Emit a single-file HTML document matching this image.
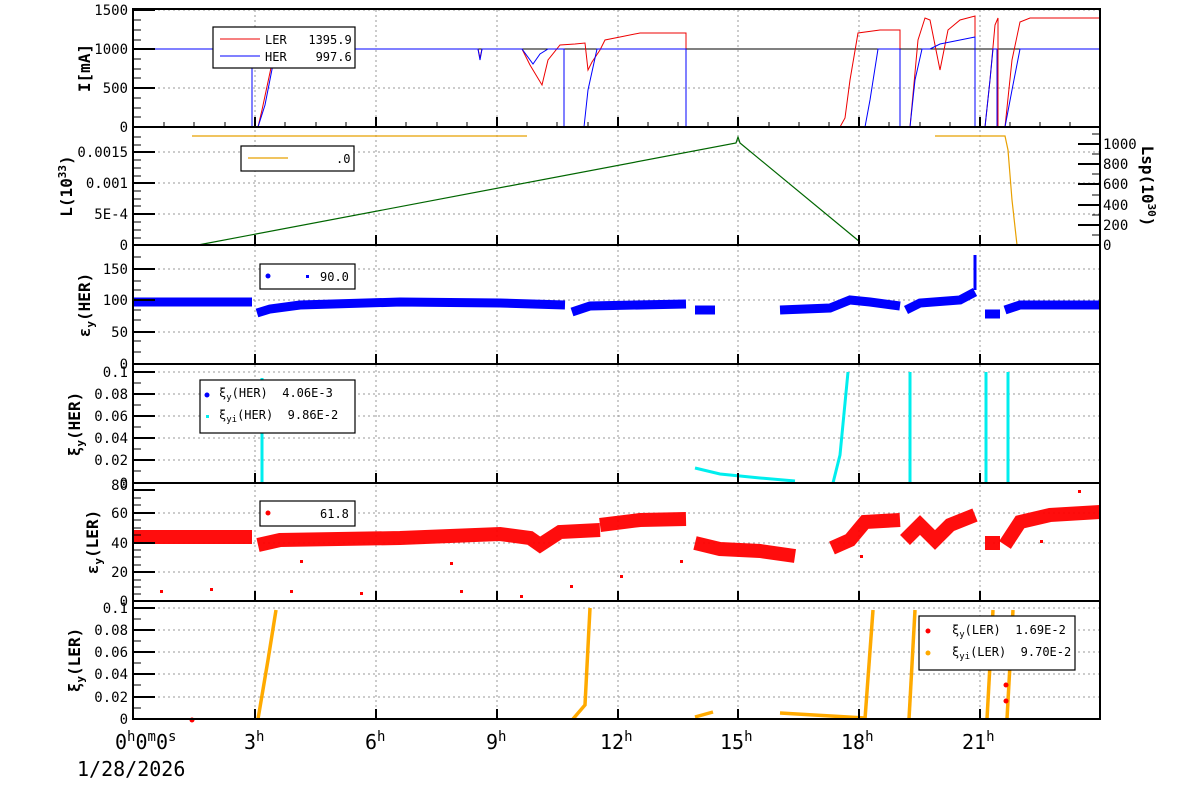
<!DOCTYPE html><html><head><style>body{margin:0;background:#fff}svg{display:block}text{font-family:"DejaVu Sans Mono","Liberation Mono",monospace;fill:#000;white-space:pre}</style></head><body>
<svg width="1200" height="798" viewBox="0 0 1200 798" xmlns="http://www.w3.org/2000/svg" xml:space="preserve">
<g stroke="#999" stroke-dasharray="2,3" stroke-width="1">
<path d="M255 10V719M376 10V719M497 10V719M618 10V719M738 10V719M859 10V719M980 10V719"/>
<path d="M133 10H1100M133 49H1100M133 88H1100M133 152H1100M133 183H1100M133 214H1100M133 269H1100M133 300H1100M133 332H1100M133 372H1100M133 394H1100M133 416H1100M133 438H1100M133 460H1100M133 513H1100M133 543H1100M133 572H1100M133 608H1100M133 630H1100M133 652H1100M133 674H1100M133 697H1100"/>
</g>
<path d="M133 49H1100" stroke="#000" stroke-width="1" fill="none"/>
<path d="M133 49H252V127H258L262 110L275 49H478L480 58L482 49H522L530 65L542 85L548 60L560 45L575 44L585 43L588 70L592 62L600 50L605 40L620 37L640 33H686V127H840L845 118L850 80L858 33L880 30L900 30V127H910L918 40L925 18L930 20L940 70L948 30L960 20L975 16V127H985L990 80L995 25L998 18V127H1005L1012 60L1020 22L1030 18H1100" stroke="#e00" stroke-width="1" fill="none"/>
<path d="M133 49H252V127H258L265 105L276 49H478L480 60L482 49H522L533 64L540 54L548 49H564V127H584L588 90L597 49H686V127H865L870 100L878 49H900V127H910L915 80L922 49H930L940 44L960 40L975 37V127H985L990 80L993 49H997V127H1005L1012 90L1020 49H1100" stroke="#00f" stroke-width="1" fill="none"/>
<path d="M192 136H527M935 136H1005L1008 150L1012 200L1017 245" stroke="#e8a000" stroke-width="1.2" fill="none"/>
<path d="M198 245L736 143L738 137L740 143L860 242" stroke="#060" stroke-width="1.2" fill="none"/>
<g stroke="#00f" stroke-width="9" fill="none">
<path d="M133 302H252"/><path d="M257 313L270 309L300 305L400 302L500 303L565 305"/><path d="M572 312L590 306L686 304"/><path d="M695 310H715"/><path d="M780 310L830 308L850 300L870 302L900 306"/><path d="M906 310L920 303L960 300L975 292"/><path d="M985 314H1000"/><path d="M1005 310L1020 305H1100"/>
</g>
<path d="M975 290V255" stroke="#00f" stroke-width="3"/>
<g stroke="#0ee" stroke-width="3" fill="none">
<path d="M262 483V378"/><path d="M695 468L720 474L760 478L795 481"/><path d="M833 483L840 455L848 372"/><path d="M910 483V372"/><path d="M986 483V372"/><path d="M1008 483V372"/>
</g>
<g stroke="#f00" stroke-width="14" fill="none" stroke-opacity="0.95">
<path d="M133 537H252"/><path d="M258 545L280 540L400 538L500 534L530 538L540 545L560 532L600 530"/><path d="M600 525L640 520L686 519"/><path d="M695 543L720 549L760 551L795 556"/><path d="M832 548L850 540L865 522L900 520"/><path d="M905 540L920 525L935 540L950 525L975 515"/><path d="M985 543H1000"/><path d="M1005 545L1020 522L1050 515L1100 512"/>
</g>
<g fill="#f00"><rect x="160" y="590" width="3" height="3"/><rect x="210" y="588" width="3" height="3"/><rect x="290" y="590" width="3" height="3"/><rect x="360" y="592" width="3" height="3"/><rect x="460" y="590" width="3" height="3"/><rect x="570" y="585" width="3" height="3"/><rect x="620" y="575" width="3" height="3"/><rect x="520" y="595" width="3" height="3"/><rect x="1078" y="490" width="3" height="3"/><rect x="300" y="560" width="3" height="3"/><rect x="450" y="562" width="3" height="3"/><rect x="680" y="560" width="3" height="3"/><rect x="860" y="555" width="3" height="3"/><rect x="1040" y="540" width="3" height="3"/></g>
<g stroke="#fa0" stroke-width="3.5" fill="none">
<path d="M258 719L268 660L276 610"/><path d="M573 719L585 705L590 608"/><path d="M695 717L713 712"/><path d="M780 713L865 718"/><path d="M865 719L873 610"/><path d="M909 719L915 610"/><path d="M987 719L993 610"/><path d="M1007 719L1013 610"/>
</g>
<circle cx="192" cy="720" r="2.5" fill="#f00"/><circle cx="1006" cy="685" r="2.5" fill="#f00"/><circle cx="1006" cy="701" r="2.5" fill="#f00"/>
<g fill="none" stroke="#000" stroke-width="2">
<rect x="133" y="9" width="967" height="710"/>
<path d="M133 127H1100M133 245H1100M133 364H1100M133 483H1100M133 601H1100"/>
</g>
<g stroke="#000" stroke-width="2">
<path d="M255 127v-10M376 127v-10M497 127v-10M618 127v-10M738 127v-10M859 127v-10M980 127v-10M255 245v-10M376 245v-10M497 245v-10M618 245v-10M738 245v-10M859 245v-10M980 245v-10M255 364v-10M376 364v-10M497 364v-10M618 364v-10M738 364v-10M859 364v-10M980 364v-10M255 483v-10M376 483v-10M497 483v-10M618 483v-10M738 483v-10M859 483v-10M980 483v-10M255 601v-10M376 601v-10M497 601v-10M618 601v-10M738 601v-10M859 601v-10M980 601v-10M255 719v-10M376 719v-10M497 719v-10M618 719v-10M738 719v-10M859 719v-10M980 719v-10"/>
<path d="M133 10h22M133 49h22M133 88h22M133 152h22M133 183h22M133 214h22M133 269h22M133 300h22M133 332h22M133 372h22M133 394h22M133 416h22M133 438h22M133 460h22M133 490h22M133 513h22M133 543h22M133 572h22M133 608h22M133 630h22M133 652h22M133 674h22M133 697h22M1100 144h-22M1100 164h-22M1100 184h-22M1100 205h-22M1100 225h-22"/>
</g>
<g stroke="#000" stroke-width="1"><path d="M133 20h8M133 30h8M133 40h8M133 59h8M133 69h8M133 78h8M133 98h8M133 108h8M133 117h8M133 137h8M133 145h8M133 160h8M133 168h8M133 176h8M133 191h8M133 199h8M133 206h8M133 222h8M133 230h8M133 238h8M133 257h8M133 281h8M133 290h8M133 310h8M133 320h8M133 341h8M133 352h8M133 383h8M133 405h8M133 427h8M133 449h8M133 471h8M133 498h8M133 505h8M133 520h8M133 528h8M133 535h8M133 550h8M133 557h8M133 565h8M133 580h8M133 587h8M133 594h8M133 619h8M133 641h8M133 663h8M133 685h8M133 708h8M1100 134h-8M1100 154h-8M1100 174h-8M1100 195h-8M1100 215h-8M1100 235h-8"/>
<path d="M164 127v-5M194 127v-5M225 127v-5M285 127v-5M316 127v-5M346 127v-5M406 127v-5M437 127v-5M467 127v-5M527 127v-5M557 127v-5M588 127v-5M648 127v-5M678 127v-5M708 127v-5M769 127v-5M799 127v-5M829 127v-5M889 127v-5M920 127v-5M950 127v-5M1010 127v-5M1040 127v-5M1070 127v-5"/></g>
<g fill="#fff" stroke="#000" stroke-width="1.2">
<rect x="213" y="27" width="142" height="41"/><rect x="241" y="146" width="113" height="25"/><rect x="260" y="264" width="95" height="25"/><rect x="200" y="380" width="155" height="53"/><rect x="260" y="501" width="95" height="25"/><rect x="919" y="616" width="156" height="54"/>
</g>
<path d="M220 39H260" stroke="#e00"/><path d="M220 56H260" stroke="#00f"/><path d="M248 158H288" stroke="#e8a000" stroke-width="1.2"/>
<g font-size="12">
<text x="265" y="44">LER   1395.9</text><text x="265" y="61">HER    997.6</text>
<text x="336" y="163">.0</text>
<text x="320" y="281">90.0</text>
<text x="219" y="397">ξ<tspan font-size="9" dy="3">y</tspan><tspan dy="-3">(HER)  4.06E-3</tspan></text>
<text x="219" y="419">ξ<tspan font-size="9" dy="3">yi</tspan><tspan dy="-3">(HER)  9.86E-2</tspan></text>
<text x="320" y="518">61.8</text>
<text x="952" y="634">ξ<tspan font-size="9" dy="3">y</tspan><tspan dy="-3">(LER)  1.69E-2</tspan></text>
<text x="952" y="656">ξ<tspan font-size="9" dy="3">yi</tspan><tspan dy="-3">(LER)  9.70E-2</tspan></text>
</g>
<circle cx="268" cy="276" r="2.5" fill="#00f"/><rect x="306" y="275" width="3" height="3" fill="#00f"/>
<circle cx="207" cy="395" r="2.5" fill="#00f"/><rect x="206" y="415" width="3" height="3" fill="#0ee"/>
<circle cx="268" cy="513" r="2.5" fill="#f00"/>
<circle cx="928" cy="631" r="2.5" fill="#f00"/><circle cx="928" cy="653" r="2.5" fill="#fa0"/>
<g font-size="14" text-anchor="end">
<text x="128" y="15">1500</text><text x="128" y="54">1000</text><text x="128" y="93">500</text><text x="128" y="132">0</text>
<text x="128" y="157">0.0015</text><text x="128" y="188">0.001</text><text x="128" y="219">5E-4</text><text x="128" y="250">0</text>
<text x="128" y="274">150</text><text x="128" y="305">100</text><text x="128" y="337">50</text><text x="128" y="369">0</text>
<text x="128" y="377">0.1</text><text x="128" y="399">0.08</text><text x="128" y="421">0.06</text><text x="128" y="443">0.04</text><text x="128" y="465">0.02</text><text x="128" y="488">0</text>
<text x="128" y="490">80</text><text x="128" y="518">60</text><text x="128" y="548">40</text><text x="128" y="577">20</text><text x="128" y="606">0</text>
<text x="128" y="613">0.1</text><text x="128" y="635">0.08</text><text x="128" y="657">0.06</text><text x="128" y="679">0.04</text><text x="128" y="702">0.02</text><text x="128" y="724">0</text>
</g>
<g font-size="14"><text x="1103" y="149">1000</text><text x="1103" y="169">800</text><text x="1103" y="189">600</text><text x="1103" y="210">400</text><text x="1103" y="230">200</text><text x="1103" y="250">0</text></g>
<g font-size="16" font-weight="bold">
<text transform="translate(90,68) rotate(-90)" text-anchor="middle">I[mA]</text>
<text transform="translate(72,186) rotate(-90)" text-anchor="middle">L(10<tspan font-size="11" dy="-6">33</tspan><tspan dy="6">)</tspan></text>
<text transform="translate(90,305) rotate(-90)" text-anchor="middle">ε<tspan font-size="11" dy="4">y</tspan><tspan dy="-4">(HER)</tspan></text>
<text transform="translate(80,424) rotate(-90)" text-anchor="middle">ξ<tspan font-size="11" dy="4">y</tspan><tspan dy="-4">(HER)</tspan></text>
<text transform="translate(98,542) rotate(-90)" text-anchor="middle">ε<tspan font-size="11" dy="4">y</tspan><tspan dy="-4">(LER)</tspan></text>
<text transform="translate(80,660) rotate(-90)" text-anchor="middle">ξ<tspan font-size="11" dy="4">y</tspan><tspan dy="-4">(LER)</tspan></text>
<text transform="translate(1142,186) rotate(90)" text-anchor="middle">Lsp(10<tspan font-size="11" dy="-6">30</tspan><tspan dy="6">)</tspan></text>
</g>
<g font-size="20">
<text x="115" y="749">0<tspan font-size="14" dy="-8">h</tspan><tspan dy="8">0</tspan><tspan font-size="14" dy="-8">m</tspan><tspan dy="8">0</tspan><tspan font-size="14" dy="-8">s</tspan></text>
<text x="77" y="776">1/28/2026</text>
<text x="244" y="749">3<tspan font-size="14" dy="-8">h</tspan></text>
<text x="365" y="749">6<tspan font-size="14" dy="-8">h</tspan></text>
<text x="486" y="749">9<tspan font-size="14" dy="-8">h</tspan></text>
<text x="600" y="749">12<tspan font-size="14" dy="-8">h</tspan></text>
<text x="720" y="749">15<tspan font-size="14" dy="-8">h</tspan></text>
<text x="841" y="749">18<tspan font-size="14" dy="-8">h</tspan></text>
<text x="962" y="749">21<tspan font-size="14" dy="-8">h</tspan></text>
</g>
</svg>
</body></html>
